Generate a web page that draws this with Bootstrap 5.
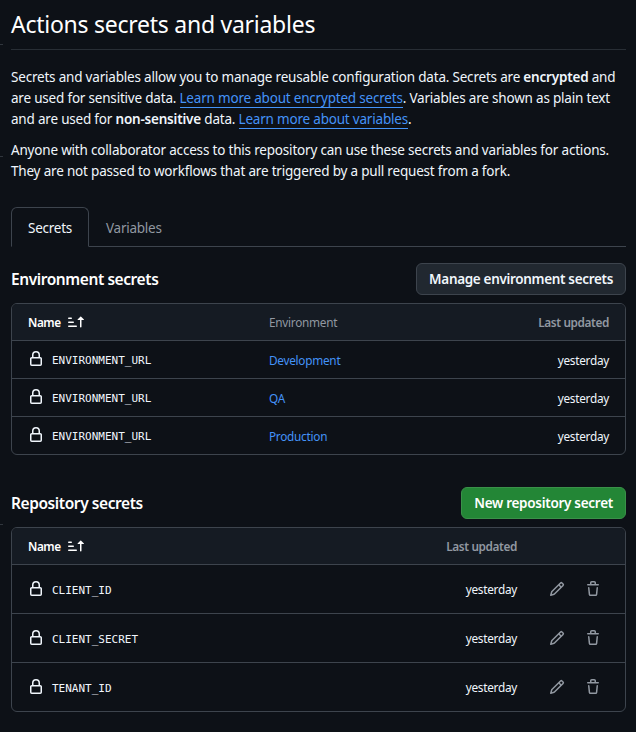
<!DOCTYPE html>
<html lang="en" data-bs-theme="dark">
<head>
<meta charset="utf-8">
<meta name="viewport" content="width=device-width, initial-scale=1">
<title>Actions secrets and variables</title>
<link href="https://cdn.jsdelivr.net/npm/bootstrap@5.3.0/dist/css/bootstrap.min.css" rel="stylesheet">
<style>
:root{--line:#3d444d;--muted:#9198a1;--link:#4493f8}
body{background:#0d1117;color:#f0f6fc;font:13.5px/21px "Noto Sans","Open Sans",sans-serif;overflow:hidden;height:732px}
.page{padding:0 10px 0 11px}
.page-title{font-size:23px;line-height:36px;height:50px;padding-top:6px;border-bottom:1px solid #30363dcc;margin-bottom:17px;letter-spacing:-.26px;font-weight:400}
.intro p{margin-bottom:10px;white-space:nowrap;letter-spacing:-.2px}
.intro .tight{letter-spacing:-.2px}
.intro .loose{letter-spacing:-.19px}
.intro a{color:var(--link);text-decoration:none;box-shadow:0 1px 0 var(--link)}
.intro b{font-weight:600}
.nav-tabs{margin-top:25px;height:40px;border-color:var(--line)}
.nav-tabs .nav-link{height:40px;padding:10px 16px 0;color:var(--muted);letter-spacing:-.25px;line-height:21px}
.nav-tabs .nav-link.active{background:#0d1117;color:#f0f6fc;border-color:var(--line) var(--line) #0d1117;width:78px}
.section-head{height:32px;margin-bottom:8px}
.section-head h2{font-size:15.5px;line-height:24px;font-weight:600;margin:0;letter-spacing:-.42px}
.act{height:32px;padding:0 12px;font-size:13.5px;line-height:20px;font-weight:600;border:1px solid var(--line);border-radius:6px;background:#212830;color:#f0f6fc;white-space:nowrap;letter-spacing:-.33px}
.act-go{background:#238636;border-color:#3a9149;color:#fff;letter-spacing:-.28px}
.secrets{border:1px solid var(--line);border-radius:6px;font-size:11.8px;line-height:18px;overflow:hidden;letter-spacing:-.27px}
.secrets .line{height:38px;border-top:1px solid var(--line);padding:0 16px}
.secrets .line.top{height:36px;border-top:0;background:#151b23;font-weight:600;color:var(--muted)}
.secrets.tall .line{height:49px}
.secrets.tall .line.top{height:36px}
.top .c-when{letter-spacing:-.38px}
.nm{letter-spacing:-.45px;width:32px;white-space:nowrap}
.c-name{width:241px}
.c-when{width:90px;text-align:right}
.tall .c-when{margin-right:92px}
.tall .acts .c-when{margin-right:32px}
.secrets .code{font:11px/18px "DejaVu Sans Mono",monospace;letter-spacing:0;margin-left:8px;padding-top:2px}
.tall .code{padding-top:4px!important}
.secrets a{color:var(--link);text-decoration:none}
svg{fill:currentColor;display:block;flex:none}
.c-name svg{margin-top:-1px}
.tool{color:var(--muted);gap:20px;margin-right:8px}
.edge{position:absolute;left:0;width:3px;height:1px;background:#30363d}
</style>
<script src="https://cdn.jsdelivr.net/npm/bootstrap@5.3.0/dist/js/bootstrap.bundle.min.js"></script>
</head>
<body>
<svg width="0" height="0" class="position-absolute">
<symbol id="lock" viewBox="0 0 16 16"><path d="M4 4a4 4 0 0 1 8 0v2h.25c.966 0 1.75.784 1.75 1.75v5.5A1.75 1.75 0 0 1 12.25 15h-8.5A1.75 1.75 0 0 1 2 13.25v-5.5C2 6.784 2.784 6 3.75 6H4Zm8.25 3.5h-8.5a.25.25 0 0 0-.25.25v5.5c0 .138.112.25.25.25h8.5a.25.25 0 0 0 .25-.25v-5.5a.25.25 0 0 0-.25-.25ZM10.5 6V4a2.5 2.5 0 1 0-5 0v2Z"/></symbol>
<symbol id="sort" viewBox="0 0 16 16"><path d="m12.927 2.573 3 3A.25.25 0 0 1 15.75 6H13.5v6.75a.75.75 0 0 1-1.5 0V6H9.75a.25.25 0 0 1-.177-.427l3-3a.25.25 0 0 1 .354 0ZM0 12.25a.75.75 0 0 1 .75-.75h7.5a.75.75 0 0 1 0 1.5H.75a.75.75 0 0 1-.75-.75Zm0-4a.75.75 0 0 1 .75-.75h4.5a.75.75 0 0 1 0 1.5H.75A.75.75 0 0 1 0 8.25Zm0-4a.75.75 0 0 1 .75-.75h2.5a.75.75 0 0 1 0 1.5H.75A.75.75 0 0 1 0 4.25Z"/></symbol>
<symbol id="pencil" viewBox="0 0 16 16"><path d="M11.013 1.427a1.75 1.75 0 0 1 2.474 0l1.086 1.086a1.75 1.75 0 0 1 0 2.474l-8.61 8.61c-.21.21-.47.364-.756.445l-3.251.93a.75.75 0 0 1-.927-.928l.929-3.25c.081-.286.235-.547.445-.758l8.61-8.61Zm.176 4.823L9.75 4.81l-6.286 6.287a.253.253 0 0 0-.064.108l-.558 1.953 1.953-.558a.253.253 0 0 0 .108-.064Zm1.238-3.763a.25.25 0 0 0-.354 0L10.811 3.75l1.439 1.44 1.263-1.263a.25.25 0 0 0 0-.354Z"/></symbol>
<symbol id="trash" viewBox="0 0 16 16"><path d="M11 1.75V3h2.25a.75.75 0 0 1 0 1.5H2.75a.75.75 0 0 1 0-1.5H5V1.75C5 .784 5.784 0 6.75 0h2.5C10.216 0 11 .784 11 1.75ZM4.496 6.675l.66 6.6a.25.25 0 0 0 .249.225h5.19a.25.25 0 0 0 .249-.225l.66-6.6a.75.75 0 0 1 1.492.149l-.66 6.6A1.748 1.748 0 0 1 10.595 15h-5.19a1.75 1.75 0 0 1-1.741-1.575l-.66-6.6a.75.75 0 1 1 1.492-.15ZM6.5 1.75V3h3V1.75a.25.25 0 0 0-.25-.25h-2.5a.25.25 0 0 0-.25.25Z"/></symbol>
</svg>
<i class="edge" style="top:44px"></i><i class="edge" style="top:156px"></i><i class="edge" style="top:524px"></i>
<main class="page">
<h1 class="page-title">Actions secrets and variables</h1>
<div class="intro">
<p>Secrets and variables allow you to manage reusable configuration data. Secrets are <b>encrypted</b> and<br>are used for sensitive data. <a href="#">Learn more about encrypted secrets</a>. Variables are shown as plain text<br><span class="tight">and are used for <b>non-sensitive</b> data. <a href="#">Learn more about variables</a>.</span></p>
<p class="loose">Anyone with collaborator access to this repository can use these secrets and variables for actions.<br>They are not passed to workflows that are triggered by a pull request from a fork.</p>
</div>
<ul class="nav nav-tabs">
<li class="nav-item"><a class="nav-link active" href="#">Secrets</a></li>
<li class="nav-item"><a class="nav-link" href="#">Variables</a></li>
</ul>
<section class="mt-3">
<div class="section-head d-flex align-items-center justify-content-between"><h2>Environment secrets</h2><button class="btn act">Manage environment secrets</button></div>
<div class="secrets">
<div class="line top d-flex align-items-center"><div class="c-name d-flex align-items-center text-white"><span class="nm">Name</span><svg class="ms-2 mt-0" width="16" height="16"><use href="#sort"/></svg></div><div class="c-env flex-grow-1 fw-normal">Environment</div><div class="c-when">Last updated</div></div>
<div class="line d-flex align-items-center"><div class="c-name d-flex align-items-center"><svg width="16" height="16"><use href="#lock"/></svg><span class="code">ENVIRONMENT_URL</span></div><div class="c-env flex-grow-1"><a href="#">Development</a></div><div class="c-when">yesterday</div></div>
<div class="line d-flex align-items-center"><div class="c-name d-flex align-items-center"><svg width="16" height="16"><use href="#lock"/></svg><span class="code">ENVIRONMENT_URL</span></div><div class="c-env flex-grow-1"><a href="#">QA</a></div><div class="c-when">yesterday</div></div>
<div class="line d-flex align-items-center"><div class="c-name d-flex align-items-center"><svg width="16" height="16"><use href="#lock"/></svg><span class="code">ENVIRONMENT_URL</span></div><div class="c-env flex-grow-1"><a href="#">Production</a></div><div class="c-when">yesterday</div></div>
</div>
</section>
<section class="mt-4 pt-2">
<div class="section-head d-flex align-items-center justify-content-between"><h2>Repository secrets</h2><button class="btn act act-go">New repository secret</button></div>
<div class="secrets tall">
<div class="line top d-flex align-items-center"><div class="flex-grow-1 d-flex align-items-center text-white"><span class="nm">Name</span><svg class="ms-2" width="16" height="16"><use href="#sort"/></svg></div><div class="c-when">Last updated</div></div>
<div class="line acts d-flex align-items-center"><div class="flex-grow-1 d-flex align-items-center"><svg width="16" height="16"><use href="#lock"/></svg><span class="code">CLIENT_ID</span></div><div class="c-when">yesterday</div><div class="tool d-flex"><svg width="16" height="16"><use href="#pencil"/></svg><svg width="16" height="16"><use href="#trash"/></svg></div></div>
<div class="line acts d-flex align-items-center"><div class="flex-grow-1 d-flex align-items-center"><svg width="16" height="16"><use href="#lock"/></svg><span class="code">CLIENT_SECRET</span></div><div class="c-when">yesterday</div><div class="tool d-flex"><svg width="16" height="16"><use href="#pencil"/></svg><svg width="16" height="16"><use href="#trash"/></svg></div></div>
<div class="line acts d-flex align-items-center"><div class="flex-grow-1 d-flex align-items-center"><svg width="16" height="16"><use href="#lock"/></svg><span class="code">TENANT_ID</span></div><div class="c-when">yesterday</div><div class="tool d-flex"><svg width="16" height="16"><use href="#pencil"/></svg><svg width="16" height="16"><use href="#trash"/></svg></div></div>
</div>
</section>
</main>
</body>
</html>
